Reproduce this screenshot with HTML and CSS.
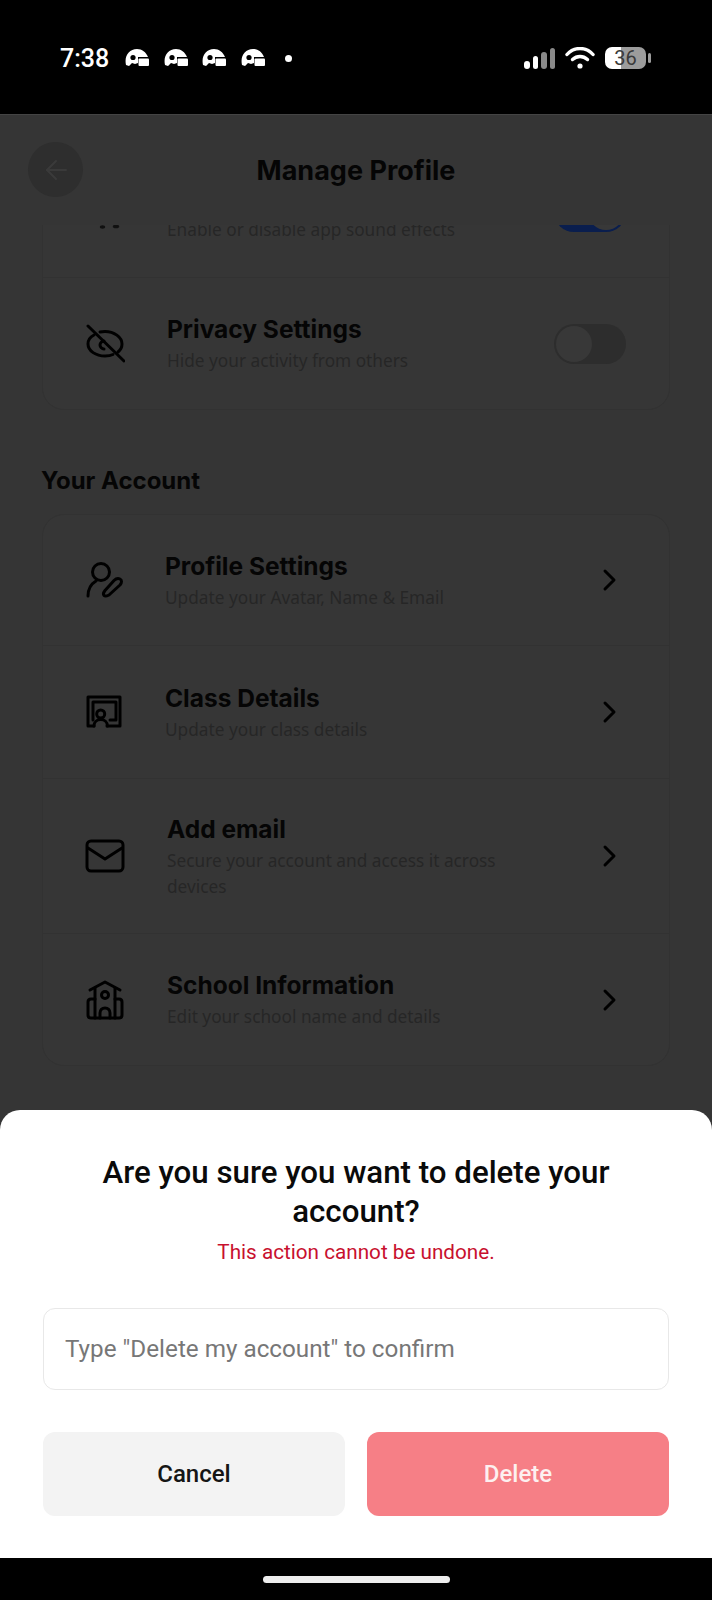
FILE: index.html
```html
<!DOCTYPE html>
<html lang="en">
<head>
    <meta charset="UTF-8">
    <meta name="viewport" content="width=device-width, initial-scale=1.0">
    <title>Manage Profile</title>
    <link rel="stylesheet" href="styles.css">
</head>
<body>
    <div class="phone">
        <div class="status-bar">
            <div class="status-left">
                <span class="clock">7:38</span>
                <svg class="notif" viewBox="0 0 24 18"><path d="M1 16C-1 7 4 0 12 0c5 0 9 3 11 8H13v6l-3 1-3-1-3 3z"/><circle class="notif-eye" cx="8" cy="8.500" r="2.600"/><rect x="13.500" y="9.500" width="10.500" height="7.500" rx="1"/></svg>
                <svg class="notif" viewBox="0 0 24 18"><path d="M1 16C-1 7 4 0 12 0c5 0 9 3 11 8H13v6l-3 1-3-1-3 3z"/><circle class="notif-eye" cx="8" cy="8.500" r="2.600"/><rect x="13.500" y="9.500" width="10.500" height="7.500" rx="1"/></svg>
                <svg class="notif" viewBox="0 0 24 18"><path d="M1 16C-1 7 4 0 12 0c5 0 9 3 11 8H13v6l-3 1-3-1-3 3z"/><circle class="notif-eye" cx="8" cy="8.500" r="2.600"/><rect x="13.500" y="9.500" width="10.500" height="7.500" rx="1"/></svg>
                <svg class="notif" viewBox="0 0 24 18"><path d="M1 16C-1 7 4 0 12 0c5 0 9 3 11 8H13v6l-3 1-3-1-3 3z"/><circle class="notif-eye" cx="8" cy="8.500" r="2.600"/><rect x="13.500" y="9.500" width="10.500" height="7.500" rx="1"/></svg>
                <span class="status-dot"></span>
            </div>
            <div class="status-right">
                <div class="signal">
                    <span class="bar bar-1"></span>
                    <span class="bar bar-2"></span>
                    <span class="bar bar-3"></span>
                    <span class="bar bar-4"></span>
                </div>
                <svg class="wifi" viewBox="0 0 30 22" fill="none" stroke="#fff" stroke-width="3.400" stroke-linecap="round"><path d="M2 7.500C9-.5 21-.5 28 7.500"/><path d="M7.500 12.500c4.500-4 10.500-4 15 0"/><circle cx="15" cy="19" r="2.600" fill="#fff" stroke="none"/></svg>
                <div class="battery"><span class="battery-level">36</span></div>
                <span class="battery-nub"></span>
            </div>
        </div>

        <main class="screen">
            <header class="top-bar">
                <div class="back-btn">
                    <svg viewBox="0 0 30 30" fill="none" stroke="#3a3a3a" stroke-width="2" stroke-linecap="round" stroke-linejoin="round"><path d="M25 15H6"/><path d="M15 6l-9 9 9 9"/></svg>
                </div>
                <h1>Manage Profile</h1>
            </header>

            <div class="scroll-area">
                <div class="scroll-inner">
                    <section class="card">
                        <div class="row">
                            <span class="row-icon">
                                <svg viewBox="0 0 40 40" fill="#111" stroke="#111" stroke-width="1.500" stroke-linecap="round" stroke-linejoin="round"><path d="M20 30V12l13-3v18" fill="none" stroke-width="3"/><ellipse cx="17.500" cy="35" rx="2" ry="1"/><ellipse cx="31" cy="34.500" rx="2.500" ry="1"/></svg>
                            </span>
                            <div class="row-text row-text-wide">
                                <h3>Sound Effects</h3>
                                <p>Enable or disable app sound effects</p>
                            </div>
                            <span class="toggle toggle-on"><span class="knob"></span></span>
                        </div>
                        <div class="row">
                            <span class="row-icon">
                                <svg viewBox="0 0 40 40" fill="none" stroke="#000" stroke-width="3" stroke-linecap="round" stroke-linejoin="round"><path d="M3 2l36 35"/><path d="M9 11C5 13 3 17 3 20c0 7 8 12 17 12 3 0 6-.5 8-1.500"/><path d="M15 8c2-.5 3.500-.5 5-.5 9 0 17 5.500 17 12.500 0 3-1.500 6-4 8"/><path d="M19 17c-2 0-4 2-4 4s2 4 4 4"/></svg>
                            </span>
                            <div class="row-text row-text-wide">
                                <h3>Privacy Settings</h3>
                                <p>Hide your activity from others</p>
                            </div>
                            <span class="toggle"><span class="knob"></span></span>
                        </div>
                    </section>

                    <h2 class="section-title">Your Account</h2>

                    <section class="card">
                        <div class="row">
                            <span class="row-icon">
                                <svg viewBox="0 0 40 40" fill="none" stroke="#000" stroke-width="3" stroke-linecap="round" stroke-linejoin="round"><circle cx="16" cy="12" r="8.500"/><path d="M3 36c0-7 3-12 8-15"/><path d="M24 35c-2 1-4 1.500-5 .5s-.5-3 1-5l9-10c2-2 4-2.500 6-1.500s2 3.500 0 6z"/></svg>
                            </span>
                            <div class="row-text">
                                <h3>Profile Settings</h3>
                                <p>Update your Avatar, Name &amp; Email</p>
                            </div>
                            <svg class="chevron" viewBox="0 0 16 24" fill="none" stroke="#000" stroke-width="3" stroke-linecap="round" stroke-linejoin="round"><path d="M3 3l9 9-9 9"/></svg>
                        </div>
                        <div class="row row-class">
                            <span class="row-icon">
                                <svg viewBox="0 0 40 40" fill="none" stroke="#000" stroke-width="3" stroke-linecap="round" stroke-linejoin="round"><path d="M9 34H3V5h32v29H22"/><path d="M8 28V10h23v18h-6"/><circle cx="15.700" cy="22" r="4"/><path d="M9 34c0-4 3-6.500 6.700-6.500s6.700 2.500 6.700 6.500"/></svg>
                            </span>
                            <div class="row-text">
                                <h3>Class Details</h3>
                                <p>Update your class details</p>
                            </div>
                            <svg class="chevron" viewBox="0 0 16 24" fill="none" stroke="#000" stroke-width="3" stroke-linecap="round" stroke-linejoin="round"><path d="M3 3l9 9-9 9"/></svg>
                        </div>
                        <div class="row row-email">
                            <span class="row-icon">
                                <svg viewBox="0 0 40 40" fill="none" stroke="#000" stroke-width="3" stroke-linecap="round" stroke-linejoin="round"><rect x="2" y="5" width="36" height="30" rx="4"/><path d="M3 12l17 11 17-11"/></svg>
                            </span>
                            <div class="row-text row-text-wide">
                                <h3>Add email</h3>
                                <p>Secure your account and access it across devices</p>
                            </div>
                            <svg class="chevron" viewBox="0 0 16 24" fill="none" stroke="#000" stroke-width="3" stroke-linecap="round" stroke-linejoin="round"><path d="M3 3l9 9-9 9"/></svg>
                        </div>
                        <div class="row">
                            <span class="row-icon">
                                <svg viewBox="0 0 40 40" fill="none" stroke="#000" stroke-width="3" stroke-linecap="round" stroke-linejoin="round"><path d="M5 10L20 2l15 8"/><path d="M10 8v30"/><path d="M30 8v30"/><path d="M10 19H6c-2 0-3 1-3 3v13c0 2 1 3 3 3h28c2 0 3-1 3-3V22c0-2-1-3-3-3h-4"/><circle cx="20" cy="15" r="3.500"/><path d="M15 38v-5c0-3 2-5 5-5s5 2 5 5v5"/></svg>
                            </span>
                            <div class="row-text row-text-wide">
                                <h3>School Information</h3>
                                <p>Edit your school name and details</p>
                            </div>
                            <svg class="chevron" viewBox="0 0 16 24" fill="none" stroke="#000" stroke-width="3" stroke-linecap="round" stroke-linejoin="round"><path d="M3 3l9 9-9 9"/></svg>
                        </div>
                    </section>
                </div>
            </div>

            <section class="sheet">
                <h2>Are you sure you want to delete your account?</h2>
                <p class="warning">This action cannot be undone.</p>
                <input class="confirm-input" type="text" placeholder='Type "Delete my account" to confirm'>
                <div class="sheet-actions">
                    <button class="btn btn-cancel" type="button">Cancel</button>
                    <button class="btn btn-delete" type="button">Delete</button>
                </div>
            </section>
        </main>

        <div class="nav-bar"><span class="home-bar"></span></div>
    </div>
</body>
</html>
```

FILE: styles.css
```css
* {
    box-sizing: border-box;
}

body {
    margin: 0;
    padding: 0;
    background-color: #000;
    font-family: Roboto, Arial, sans-serif;
}

.phone {
    width: 712px;
    height: 1600px;
    display: flex;
    flex-direction: column;
    overflow: hidden;
}

/* status bar */
.status-bar {
    height: 114px;
    flex-shrink: 0;
    background-color: #000;
    display: flex;
    justify-content: space-between;
    align-items: flex-start;
    padding: 46px 61px 0 60px;
}

.status-left {
    display: flex;
    align-items: center;
    height: 24px;
}

.clock {
    color: #fff;
    font-size: 25px;
    font-weight: 500;
    width: 65px;
}

.notif {
    width: 24px;
    height: 18px;
    margin-right: 14.500px;
    fill: #fff;
}

.notif-eye {
    fill: #000;
}

.status-dot {
    width: 7px;
    height: 7px;
    border-radius: 50%;
    background-color: #fff;
    margin-left: 6px;
}

.status-right {
    display: flex;
    align-items: center;
    height: 24px;
}

.signal {
    display: flex;
    align-items: flex-end;
    gap: 3px;
    height: 21px;
    margin-right: 10px;
}

.bar {
    width: 5.500px;
    border-radius: 3px;
    background-color: #fff;
}

.bar-1 { height: 8px; }
.bar-2 { height: 13px; }
.bar-3 { height: 17px; background-color: #8a8a8a; }
.bar-4 { height: 21px; background-color: #8a8a8a; }

.wifi {
    width: 30px;
    height: 22px;
    margin-right: 10px;
}

.battery {
    width: 41px;
    height: 22px;
    border-radius: 7px;
    background: linear-gradient(90deg, #fff 0, #fff 39%, #9c9c9c 39%, #9c9c9c 100%);
    display: flex;
    align-items: center;
    justify-content: center;
}

.battery-level {
    color: #3a3a3a;
    font-size: 20px;
    font-weight: 400;
}

.battery-nub {
    width: 3px;
    height: 10px;
    border-radius: 2px;
    background-color: #9c9c9c;
    margin-left: 2px;
}

/* main screen, dimmed behind the sheet */
.screen {
    position: relative;
    flex: 1;
    display: flex;
    flex-direction: column;
    overflow: hidden;
    background-color: #353535;
    border-top: 1px solid #444;
}

.top-bar {
    height: 110px;
    flex-shrink: 0;
    position: relative;
    display: flex;
    align-items: center;
    justify-content: center;
}

.top-bar h1 {
    margin: 0;
    color: #050505;
    font-family: Inter, Arial, sans-serif;
    font-size: 27px;
    font-weight: 700;
}

.back-btn {
    position: absolute;
    left: 28px;
    top: 27px;
    width: 55px;
    height: 55px;
    border-radius: 50%;
    background-color: #2e2e2e;
    display: flex;
    align-items: center;
    justify-content: center;
}

.back-btn svg {
    width: 30px;
    height: 30px;
}

.scroll-area {
    flex: 1;
    overflow: hidden;
}

.scroll-inner {
    margin-top: -79px;
    padding: 0 42px;
}

.card {
    border: 1px solid #323232;
    border-radius: 22px;
    background-color: #363636;
}

.row {
    display: flex;
    align-items: center;
    height: 131px;
    padding: 0 42px 0 42px;
    border-bottom: 1px solid #323232;
}

.row:last-child {
    border-bottom: none;
}

.row-class {
    height: 133px;
}

.row-email {
    height: 155px;
}

.row-icon {
    width: 40px;
    height: 40px;
    flex-shrink: 0;
}

.row-icon svg {
    width: 40px;
    height: 40px;
    display: block;
}

.row-text {
    flex: 1;
    margin-left: 40px;
    max-width: 350px;
}

.row-text-wide {
    margin-left: 42px;
}

.row-text h3 {
    margin: 0;
    color: #050505;
    font-family: Inter, Arial, sans-serif;
    font-size: 24.500px;
    font-weight: 700;
    line-height: 32px;
}

.row-text p {
    margin: 0;
    color: #262626;
    font-family: "Noto Sans", Arial, sans-serif;
    font-size: 17.250px;
    line-height: 26px;
    padding-top: 3px;
}

.chevron {
    width: 16px;
    height: 24px;
    margin-left: auto;
    margin-right: 9px;
}

.toggle {
    width: 72px;
    height: 40px;
    border-radius: 20px;
    background-color: #2d2d2d;
    margin-left: auto;
    margin-right: 1px;
    padding: 2px;
    display: flex;
}

.toggle-on {
    background-color: #0a1e4e;
    justify-content: flex-end;
}

.knob {
    width: 36px;
    height: 36px;
    border-radius: 50%;
    background-color: #383838;
}

.section-title {
    margin: 55px 0 17px -1px;
    color: #050505;
    font-family: Inter, Arial, sans-serif;
    font-size: 24px;
    font-weight: 700;
    line-height: 32px;
}

/* bottom sheet */
.sheet {
    position: absolute;
    left: 0;
    right: 0;
    bottom: 0;
    height: 448px;
    background-color: #fff;
    border-radius: 20px 20px 0 0;
    padding: 43px 43px 0;
    text-align: center;
}

.sheet h2 {
    margin: 0 20px;
    color: #0a0a0a;
    font-size: 31.250px;
    font-weight: 500;
    line-height: 39px;
}

.warning {
    margin: 9px 0 0;
    color: #c8102e;
    font-size: 20.700px;
    line-height: 24px;
}

.confirm-input {
    display: block;
    width: 100%;
    height: 82px;
    margin-top: 44px;
    padding: 0 21px;
    border: 1px solid #e8e8e8;
    border-radius: 12px;
    font-family: Roboto, Arial, sans-serif;
    font-size: 24.250px;
    background-color: #fff;
}

.confirm-input::placeholder {
    color: #777;
}

.sheet-actions {
    display: flex;
    gap: 22px;
    margin-top: 42px;
}

.btn {
    flex: 1;
    height: 84px;
    border: none;
    border-radius: 12px;
    font-family: Roboto, Arial, sans-serif;
    font-size: 24px;
    font-weight: 500;
    cursor: pointer;
}

.btn-cancel {
    background-color: #f3f3f3;
    color: #151515;
}

.btn-delete {
    background-color: #f67f86;
    color: #fdf0f0;
}

/* bottom nav */
.nav-bar {
    height: 42px;
    flex-shrink: 0;
    background-color: #000;
    display: flex;
    justify-content: center;
    padding-top: 18px;
}

.home-bar {
    width: 187px;
    height: 7px;
    border-radius: 4px;
    background-color: #eee;
}
```
